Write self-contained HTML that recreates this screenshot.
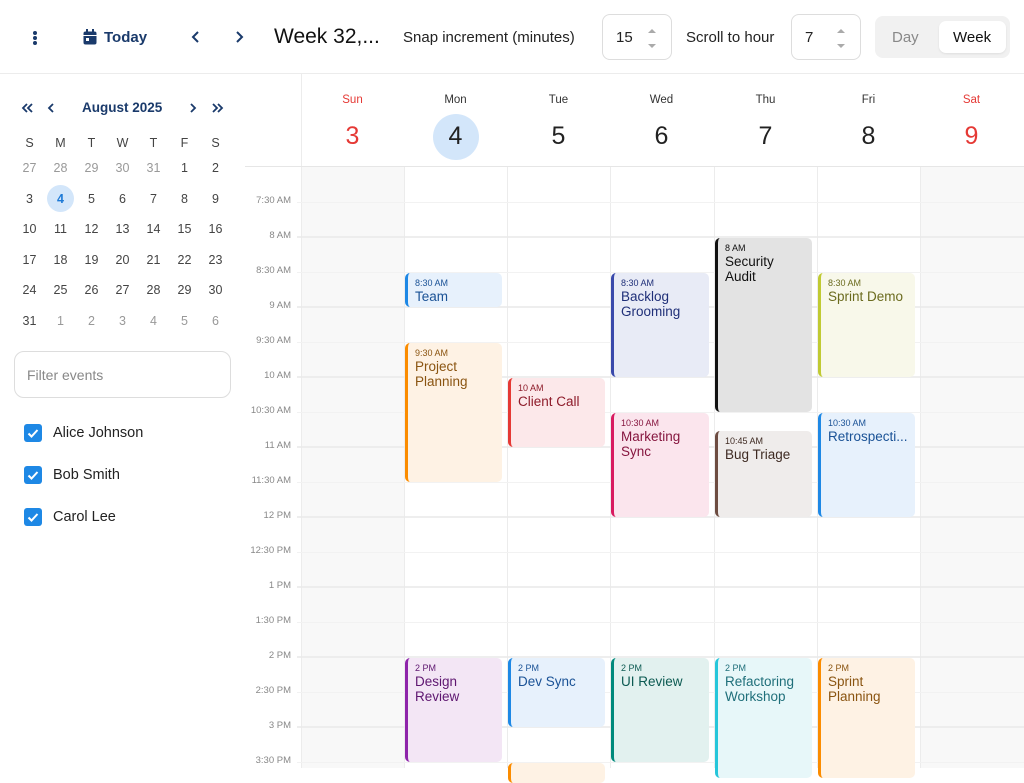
<!DOCTYPE html>
<html><head><meta charset="utf-8"><style>
*{box-sizing:border-box;margin:0;padding:0}
body{width:1024px;height:768px;overflow:hidden;background:#fff;font-family:"Liberation Sans","DejaVu Sans",sans-serif;color:#222;position:relative}
.a{position:absolute}
.tb{left:0;top:0;width:1024px;height:74px;border-bottom:1px solid #ececec}
.t15{font-size:15px;color:#222}
.inp{border:1px solid #ddd;border-radius:8px;height:46px;top:14px;background:#fff}
.inp span{position:absolute;left:13px;top:14px;font-size:15px}
.spin{position:absolute;right:14px;top:12px;width:10px}
.mc{font-size:12.5px;color:#444;width:31px;text-align:center}
.g{color:#999}
.ev{position:absolute;border-radius:5px;border-left:3px solid;padding:5px 0 0 7px;overflow:hidden;white-space:nowrap}
.ev b{display:block;font-size:9px;font-weight:normal;line-height:11px}
.ev i{display:block;font-style:normal;font-size:13.5px;line-height:15px}
.lbl{font-size:9.5px;color:#888;width:48px;text-align:right;left:243px}
.dn{font-size:11.5px;width:103px;text-align:center;top:94px;color:#333}
.dd{font-size:25px;width:103px;text-align:center;top:122px;color:#222}
</style></head><body>
<div class="a tb"></div>
<!-- toolbar -->
<div class="a" style="left:33px;top:31px;width:4px;height:4px;border-radius:2px;background:#1a3a6b;box-shadow:0 5px 0 #1a3a6b,0 10px 0 #1a3a6b"></div>
<svg class="a" style="left:83px;top:29px" width="14" height="16" viewBox="0 0 14 16"><rect x="0.5" y="2.5" width="13" height="13" rx="2" fill="#1a3a6b"/><rect x="3" y="0" width="2" height="4" fill="#1a3a6b"/><rect x="9" y="0" width="2" height="4" fill="#1a3a6b"/><rect x="0.5" y="6" width="13" height="1" fill="#fff"/><rect x="3" y="9" width="3" height="3" fill="#fff"/></svg>
<div class="a" style="left:104px;top:29px;font-size:15px;color:#1a3a6b;font-weight:bold">Today</div>
<svg class="a" style="left:190px;top:30px" width="12" height="14"><path d="M8 2 L3 7 L8 12" stroke="#1a3a6b" stroke-width="2" fill="none"/></svg>
<svg class="a" style="left:233px;top:30px" width="12" height="14"><path d="M4 2 L9 7 L4 12" stroke="#1a3a6b" stroke-width="2" fill="none"/></svg>
<div class="a" style="left:274px;top:25px;font-size:21px;color:#111">Week 32,...</div>
<div class="a t15" style="left:403px;top:29px">Snap increment (minutes)</div>
<div class="a inp" style="left:602px;width:70px"><span>15</span><svg class="spin" height="24" viewBox="0 0 10 24"><path d="M1 6 L5 2 L9 6Z M1 17 L5 21 L9 17Z" fill="#aaa"/></svg></div>
<div class="a t15" style="left:686px;top:29px">Scroll to hour</div>
<div class="a inp" style="left:791px;width:70px"><span>7</span><svg class="spin" height="24" viewBox="0 0 10 24"><path d="M1 6 L5 2 L9 6Z M1 17 L5 21 L9 17Z" fill="#aaa"/></svg></div>
<div class="a" style="left:875px;top:16px;width:135px;height:42px;background:#f1f1f1;border-radius:8px"></div>
<div class="a" style="left:892px;top:29px;font-size:15px;color:#888">Day</div>
<div class="a" style="left:939px;top:21px;width:67px;height:32px;background:#fff;border-radius:7px;box-shadow:0 1px 2px rgba(0,0,0,.08)"></div>
<div class="a" style="left:953px;top:29px;font-size:15px;color:#111">Week</div>
<!-- mini calendar -->
<svg class="a" style="left:20px;top:101px" width="14" height="14"><path d="M7 3 L3 7 L7 11 M12 3 L8 7 L12 11" stroke="#1a3a6b" stroke-width="1.8" fill="none"/></svg>
<svg class="a" style="left:45px;top:101px" width="12" height="14"><path d="M8 3 L4 7 L8 11" stroke="#1a3a6b" stroke-width="1.8" fill="none"/></svg>
<div class="a" style="left:82px;top:100px;font-size:13.5px;font-weight:bold;color:#1a3a6b">August 2025</div>
<svg class="a" style="left:187px;top:101px" width="12" height="14"><path d="M4 3 L8 7 L4 11" stroke="#1a3a6b" stroke-width="1.8" fill="none"/></svg>
<svg class="a" style="left:211px;top:101px" width="14" height="14"><path d="M2 3 L6 7 L2 11 M7 3 L11 7 L7 11" stroke="#1a3a6b" stroke-width="1.8" fill="none"/></svg>
<div class="a" style="left:47px;top:185px;width:27px;height:27px;border-radius:50%;background:#d3e6fa"></div>
<div class="a" style="left:14px;top:136px">
<div style="display:flex"><div class="mc">S</div><div class="mc">M</div><div class="mc">T</div><div class="mc">W</div><div class="mc">T</div><div class="mc">F</div><div class="mc">S</div></div>
</div>
<div class="a" style="left:14px;top:153px;line-height:30.6px">
<div style="display:flex"><div class="mc g">27</div><div class="mc g">28</div><div class="mc g">29</div><div class="mc g">30</div><div class="mc g">31</div><div class="mc">1</div><div class="mc">2</div></div>
<div style="display:flex"><div class="mc">3</div><div class="mc" style="color:#1e7ad6;font-weight:bold">4</div><div class="mc">5</div><div class="mc">6</div><div class="mc">7</div><div class="mc">8</div><div class="mc">9</div></div>
<div style="display:flex"><div class="mc">10</div><div class="mc">11</div><div class="mc">12</div><div class="mc">13</div><div class="mc">14</div><div class="mc">15</div><div class="mc">16</div></div>
<div style="display:flex"><div class="mc">17</div><div class="mc">18</div><div class="mc">19</div><div class="mc">20</div><div class="mc">21</div><div class="mc">22</div><div class="mc">23</div></div>
<div style="display:flex"><div class="mc">24</div><div class="mc">25</div><div class="mc">26</div><div class="mc">27</div><div class="mc">28</div><div class="mc">29</div><div class="mc">30</div></div>
<div style="display:flex"><div class="mc">31</div><div class="mc g">1</div><div class="mc g">2</div><div class="mc g">3</div><div class="mc g">4</div><div class="mc g">5</div><div class="mc g">6</div></div>
</div>
<div class="a" style="left:14px;top:351px;width:217px;height:47px;border:1px solid #ddd;border-radius:10px"></div>
<div class="a" style="left:27px;top:367px;font-size:14px;color:#888">Filter events</div>
<svg class="a" style="left:24px;top:424px" width="18" height="18"><rect width="18" height="18" rx="3" fill="#1e88e5"/><path d="M4.5 9.5 L7.5 12.5 L13.5 6" stroke="#fff" stroke-width="2" fill="none"/></svg>
<div class="a" style="left:53px;top:425px;font-size:14.5px">Alice Johnson</div>
<svg class="a" style="left:24px;top:466px" width="18" height="18"><rect width="18" height="18" rx="3" fill="#1e88e5"/><path d="M4.5 9.5 L7.5 12.5 L13.5 6" stroke="#fff" stroke-width="2" fill="none"/></svg>
<div class="a" style="left:53px;top:467px;font-size:14.5px">Bob Smith</div>
<svg class="a" style="left:24px;top:508px" width="18" height="18"><rect width="18" height="18" rx="3" fill="#1e88e5"/><path d="M4.5 9.5 L7.5 12.5 L13.5 6" stroke="#fff" stroke-width="2" fill="none"/></svg>
<div class="a" style="left:53px;top:509px;font-size:14.5px">Carol Lee</div>
<!-- header days -->
<div class="a" style="left:301px;top:74px;width:1px;height:93px;background:#ececec"></div>
<div class="a" style="left:245px;top:166px;width:779px;height:1px;background:#e6e6e6"></div>
<div class="a dn" style="left:301px;color:#e53935">Sun</div><div class="a dd" style="left:301px;color:#e53935">3</div>
<div class="a" style="left:433px;top:114px;width:46px;height:46px;border-radius:50%;background:#d3e6fa"></div>
<div class="a dn" style="left:404px">Mon</div><div class="a dd" style="left:404px">4</div>
<div class="a dn" style="left:507px">Tue</div><div class="a dd" style="left:507px">5</div>
<div class="a dn" style="left:610px">Wed</div><div class="a dd" style="left:610px">6</div>
<div class="a dn" style="left:714px">Thu</div><div class="a dd" style="left:714px">7</div>
<div class="a dn" style="left:817px">Fri</div><div class="a dd" style="left:817px">8</div>
<div class="a dn" style="left:920px;color:#e53935">Sat</div><div class="a dd" style="left:920px;color:#e53935">9</div>
<!-- grid -->
<div class="a" style="left:301px;top:167px;width:103px;height:601px;background:#f8f8f8"></div>
<div class="a" style="left:920px;top:167px;width:104px;height:601px;background:#f8f8f8"></div>
<svg class="a" style="left:245px;top:167px" width="779" height="601">
<g stroke="#ececec" stroke-width="1">
<line x1="56.5" y1="0" x2="56.5" y2="601"/><line x1="159.5" y1="0" x2="159.5" y2="601"/><line x1="262.5" y1="0" x2="262.5" y2="601"/><line x1="365.5" y1="0" x2="365.5" y2="601"/><line x1="469.5" y1="0" x2="469.5" y2="601"/><line x1="572.5" y1="0" x2="572.5" y2="601"/><line x1="675.5" y1="0" x2="675.5" y2="601"/>
</g>
<g stroke="#e9e9e9" stroke-width="1.5">
<line x1="52" y1="70" x2="779" y2="70"/><line x1="52" y1="140" x2="779" y2="140"/><line x1="52" y1="210" x2="779" y2="210"/><line x1="52" y1="280" x2="779" y2="280"/><line x1="52" y1="350" x2="779" y2="350"/><line x1="52" y1="420" x2="779" y2="420"/><line x1="52" y1="490" x2="779" y2="490"/><line x1="52" y1="560" x2="779" y2="560"/>
</g>
<g stroke="#f2f2f2" stroke-width="1">
<line x1="52" y1="35.5" x2="779" y2="35.5"/><line x1="52" y1="105.5" x2="779" y2="105.5"/><line x1="52" y1="175.5" x2="779" y2="175.5"/><line x1="52" y1="245.5" x2="779" y2="245.5"/><line x1="52" y1="315.5" x2="779" y2="315.5"/><line x1="52" y1="385.5" x2="779" y2="385.5"/><line x1="52" y1="455.5" x2="779" y2="455.5"/><line x1="52" y1="525.5" x2="779" y2="525.5"/><line x1="52" y1="595.5" x2="779" y2="595.5"/>
</g></svg>
<div class="a lbl" style="top:195px">7:30 AM</div>
<div class="a lbl" style="top:230px">8 AM</div>
<div class="a lbl" style="top:265px">8:30 AM</div>
<div class="a lbl" style="top:300px">9 AM</div>
<div class="a lbl" style="top:335px">9:30 AM</div>
<div class="a lbl" style="top:370px">10 AM</div>
<div class="a lbl" style="top:405px">10:30 AM</div>
<div class="a lbl" style="top:440px">11 AM</div>
<div class="a lbl" style="top:475px">11:30 AM</div>
<div class="a lbl" style="top:510px">12 PM</div>
<div class="a lbl" style="top:545px">12:30 PM</div>
<div class="a lbl" style="top:580px">1 PM</div>
<div class="a lbl" style="top:615px">1:30 PM</div>
<div class="a lbl" style="top:650px">2 PM</div>
<div class="a lbl" style="top:685px">2:30 PM</div>
<div class="a lbl" style="top:720px">3 PM</div>
<div class="a lbl" style="top:755px">3:30 PM</div>
<!-- events -->
<div class="ev" style="left:405px;top:273px;width:97px;height:34px;background:#e7f1fc;border-color:#1e88e5;color:#1a5296"><b>8:30 AM</b><i>Team</i></div>
<div class="ev" style="left:405px;top:343px;width:97px;height:139px;background:#fef2e4;border-color:#fb8c00;color:#8a5410"><b>9:30 AM</b><i>Project<br>Planning</i></div>
<div class="ev" style="left:508px;top:378px;width:97px;height:69px;background:#fce8ea;border-color:#e53935;color:#8e1b2a"><b>10 AM</b><i>Client Call</i></div>
<div class="ev" style="left:611px;top:273px;width:98px;height:104px;background:#e8ebf6;border-color:#3949ab;color:#1f2f78"><b>8:30 AM</b><i>Backlog<br>Grooming</i></div>
<div class="ev" style="left:611px;top:413px;width:98px;height:104px;background:#fbe5ed;border-color:#d81b60;color:#86163f"><b>10:30 AM</b><i>Marketing<br>Sync</i></div>
<div class="ev" style="left:715px;top:238px;width:97px;height:174px;background:#e3e3e3;border-color:#111;color:#111"><b>8 AM</b><i>Security<br>Audit</i></div>
<div class="ev" style="left:715px;top:431px;width:97px;height:86px;background:#efeceb;border-color:#6d4c41;color:#3e2a22"><b>10:45 AM</b><i>Bug Triage</i></div>
<div class="ev" style="left:818px;top:273px;width:97px;height:104px;background:#f8f8ea;border-color:#c0ca33;color:#6b6b1e"><b>8:30 AM</b><i>Sprint Demo</i></div>
<div class="ev" style="left:818px;top:413px;width:97px;height:104px;background:#e7f1fc;border-color:#1e88e5;color:#1a5296"><b>10:30 AM</b><i>Retrospecti...</i></div>
<div class="ev" style="left:405px;top:658px;width:97px;height:104px;background:#f3e6f5;border-color:#8e24aa;color:#5e1670"><b>2 PM</b><i>Design<br>Review</i></div>
<div class="ev" style="left:508px;top:658px;width:97px;height:69px;background:#e7f1fc;border-color:#1e88e5;color:#1a5296"><b>2 PM</b><i>Dev Sync</i></div>
<div class="ev" style="left:508px;top:763px;width:97px;height:20px;background:#fef2e4;border-color:#fb8c00"></div>
<div class="ev" style="left:611px;top:658px;width:98px;height:104px;background:#e2f1ef;border-color:#00897b;color:#0c5a52"><b>2 PM</b><i>UI Review</i></div>
<div class="ev" style="left:715px;top:658px;width:97px;height:120px;background:#e7f7f9;border-color:#26c6da;color:#1f6f7a"><b>2 PM</b><i>Refactoring<br>Workshop</i></div>
<div class="ev" style="left:818px;top:658px;width:97px;height:120px;background:#fef2e4;border-color:#fb8c00;color:#8a5410"><b>2 PM</b><i>Sprint<br>Planning</i></div>
</body></html>
